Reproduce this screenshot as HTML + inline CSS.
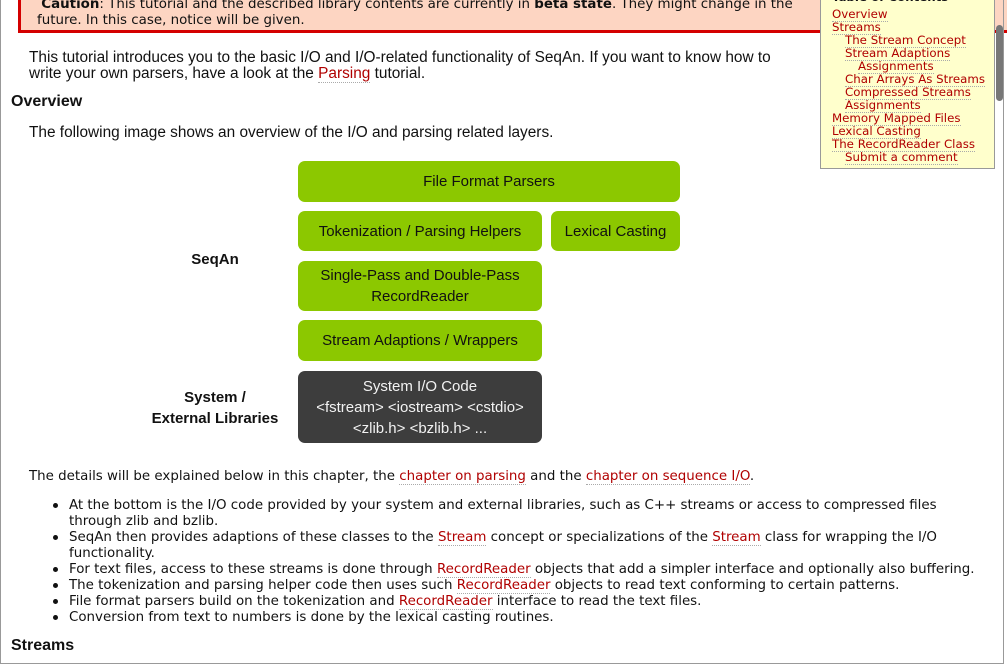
<!DOCTYPE html>
<html><head><meta charset="utf-8"><style>
html,body{margin:0;padding:0;background:#fff;width:1007px;height:667px;overflow:hidden;position:relative}
body{font-family:"DejaVu Sans",Verdana,sans-serif;color:#111}
.frame{position:absolute;left:0;top:-5px;width:1004px;height:669px;border:1px solid #999;box-sizing:border-box;border-top:none}
.abs{position:absolute;white-space:nowrap}
a{color:#b00000;text-decoration:none;border-bottom:1px dotted #aaa}
.caution{position:absolute;left:18px;top:-20px;width:1000px;height:53px;background:#fdd5c2;border:3px solid #d40000;box-sizing:border-box}
.p1{font-family:"Liberation Sans",sans-serif;font-size:15.4px;line-height:16px}
h2{margin:0;font-family:"Liberation Sans",sans-serif;font-size:16px;font-weight:bold;position:absolute}
.v{font-size:13.4px;line-height:16px}
.box{position:absolute;background:#8cc800;border-radius:7px;font-family:"Liberation Sans",sans-serif;font-size:15px;color:#111;display:flex;align-items:center;justify-content:center;text-align:center;line-height:21px}
.dark{background:#3d3d3d;color:#f2f2f2}
.lbl{position:absolute;font-family:"Liberation Sans",sans-serif;font-weight:bold;font-size:15px;text-align:center;line-height:21px}
.toc{position:absolute;left:820px;top:-10px;width:175px;height:179px;background:#ffffcc;border:1px solid #999;box-sizing:border-box;font-size:11.8px;line-height:13px;z-index:2}
.toc div{position:absolute;white-space:nowrap}
.bul{position:absolute;left:53px;width:5px;height:5px;border-radius:50%;background:#111}
.sb{position:absolute;left:996px;top:25px;width:7px;height:76px;background:#777;border-radius:4px;z-index:3}
</style></head><body>
<div class="caution"></div>
<div class="abs v" style="left:37px;top:-3px">&nbsp;<b>Caution</b>: This tutorial and the described library contents are currently in <b>beta state</b>. They might change in the</div>
<div class="abs v" style="left:37px;top:13px">future. In this case, notice will be given.</div>

<div class="abs p1" style="left:29px;top:50px">This tutorial introduces you to the basic I/O and I/O-related functionality of SeqAn. If you want to know how to</div>
<div class="abs p1" style="left:29px;top:66px">write your own parsers, have a look at the <a>Parsing</a> tutorial.</div>
<h2 style="left:11px;top:93px">Overview</h2>
<div class="abs p1" style="left:29px;top:125px">The following image shows an overview of the I/O and parsing related layers.</div>

<div class="box" style="left:298px;top:161px;width:382px;height:41px">File Format Parsers</div>
<div class="box" style="left:298px;top:211px;width:244px;height:40px">Tokenization / Parsing Helpers</div>
<div class="box" style="left:551px;top:211px;width:129px;height:40px">Lexical Casting</div>
<div class="box" style="left:298px;top:261px;width:244px;height:50px">Single-Pass and Double-Pass<br>RecordReader</div>
<div class="box" style="left:298px;top:320px;width:244px;height:41px">Stream Adaptions / Wrappers</div>
<div class="box dark" style="left:298px;top:371px;width:244px;height:72px">System I/O Code<br>&lt;fstream&gt; &lt;iostream&gt; &lt;cstdio&gt;<br>&lt;zlib.h&gt; &lt;bzlib.h&gt; ...</div>
<div class="lbl" style="left:150px;top:249px;width:130px">SeqAn</div>
<div class="lbl" style="left:150px;top:387px;width:130px">System /<br>External Libraries</div>

<div class="abs v" style="left:29px;top:469px">The details will be explained below in this chapter, the <a>chapter on parsing</a> and the <a>chapter on sequence I/O</a>.</div>

<div class="bul" style="top:503px"></div><div class="abs v" style="left:69px;top:498px">At the bottom is the I/O code provided by your system and external libraries, such as C++ streams or access to compressed files</div>
<div class="abs v" style="left:69px;top:514px">through zlib and bzlib.</div>
<div class="bul" style="top:535px"></div><div class="abs v" style="left:69px;top:530px">SeqAn then provides adaptions of these classes to the <a>Stream</a> concept or specializations of the <a>Stream</a> class for wrapping the I/O</div>
<div class="abs v" style="left:69px;top:546px">functionality.</div>
<div class="bul" style="top:567px"></div><div class="abs v" style="left:69px;top:562px">For text files, access to these streams is done through <a>RecordReader</a> objects that add a simpler interface and optionally also buffering.</div>
<div class="bul" style="top:583px"></div><div class="abs v" style="left:69px;top:578px">The tokenization and parsing helper code then uses such <a>RecordReader</a> objects to read text conforming to certain patterns.</div>
<div class="bul" style="top:599px"></div><div class="abs v" style="left:69px;top:594px">File format parsers build on the tokenization and <a>RecordReader</a> interface to read the text files.</div>
<div class="bul" style="top:615px"></div><div class="abs v" style="left:69px;top:610px">Conversion from text to numbers is done by the lexical casting routines.</div>
<h2 style="left:11px;top:637px">Streams</h2>

<div class="toc">
<div style="left:11px;top:0px;font-weight:bold">Table of Contents</div>
<div style="left:11px;top:17px"><a>Overview</a></div>
<div style="left:11px;top:30px"><a>Streams</a></div>
<div style="left:24px;top:43px"><a>The Stream Concept</a></div>
<div style="left:24px;top:56px"><a>Stream Adaptions</a></div>
<div style="left:37px;top:69px"><a>Assignments</a></div>
<div style="left:24px;top:82px"><a>Char Arrays As Streams</a></div>
<div style="left:24px;top:95px"><a>Compressed Streams</a></div>
<div style="left:24px;top:108px"><a>Assignments</a></div>
<div style="left:11px;top:121px"><a>Memory Mapped Files</a></div>
<div style="left:11px;top:134px"><a>Lexical Casting</a></div>
<div style="left:11px;top:147px"><a>The RecordReader Class</a></div>
<div style="left:24px;top:160px"><a>Submit a comment</a></div>
</div>
<div class="sb"></div>
<div class="frame"></div>
</body></html>
